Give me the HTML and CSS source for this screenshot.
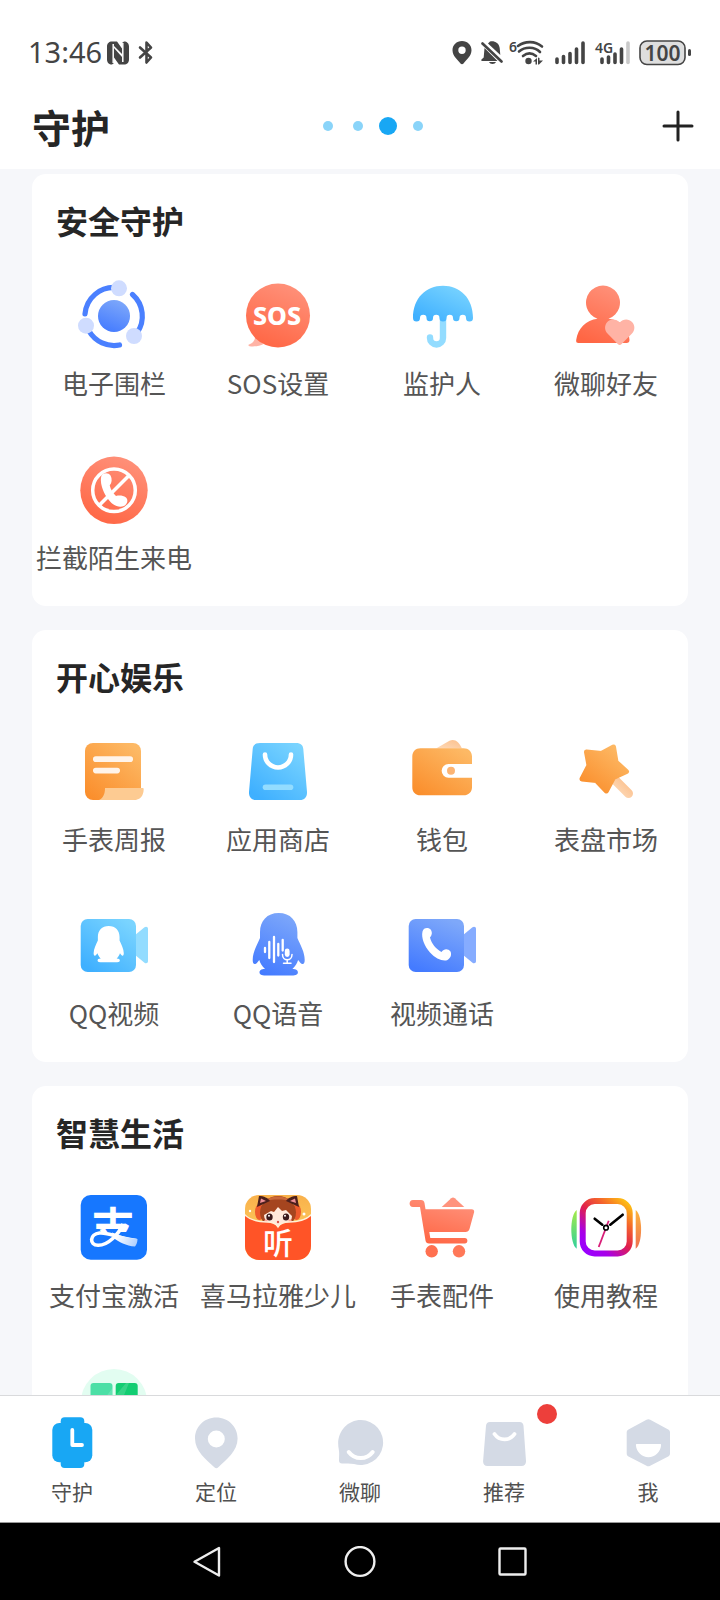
FILE: index.html
```html
<!DOCTYPE html>
<html lang="zh-CN">
<head>
    <meta charset="UTF-8">
    <meta name="viewport" content="width=device-width, initial-scale=1.0">
    <title>守护</title>
    <link rel="stylesheet" href="styles.css">
</head>
<body>
    <!-- shared gradients and shapes -->
    <svg class="defs" width="0" height="0" aria-hidden="true">
        <defs>
            <linearGradient id="red" x1="0.3" y1="1" x2="0.7" y2="0">
                <stop offset="0" stop-color="#ff6644"/><stop offset="1" stop-color="#ff917a"/>
            </linearGradient>
            <linearGradient id="sky" x1="0.1" y1="0.9" x2="0.8" y2="0">
                <stop offset="0" stop-color="#3fb0ff"/><stop offset="1" stop-color="#7ad4ff"/>
            </linearGradient>
            <linearGradient id="blue" x1="0.3" y1="1" x2="0.7" y2="0">
                <stop offset="0" stop-color="#447bff"/><stop offset="1" stop-color="#7ea8fa"/>
            </linearGradient>
            <linearGradient id="orange" x1="0" y1="1" x2="0.8" y2="0">
                <stop offset="0" stop-color="#fa8b28"/><stop offset="1" stop-color="#fdb965"/>
            </linearGradient>
            <linearGradient id="peach" x1="0" y1="1" x2="1" y2="0">
                <stop offset="0" stop-color="#fdd9b8"/><stop offset="1" stop-color="#fcc08c"/>
            </linearGradient>
            <linearGradient id="frame" x1="0.1" y1="1" x2="0.9" y2="0">
                <stop offset="0" stop-color="#9a00ff"/><stop offset="0.2" stop-color="#a800e8"/>
                <stop offset="0.5" stop-color="#e0204c"/><stop offset="0.75" stop-color="#f4642c"/>
                <stop offset="1" stop-color="#fdbb14"/>
            </linearGradient>
            <linearGradient id="strapLeft" x1="0" y1="0" x2="0" y2="1">
                <stop offset="0" stop-color="#a6ea48"/><stop offset="1" stop-color="#2fd09c"/>
            </linearGradient>
            <linearGradient id="strapRight" x1="0" y1="0" x2="0" y2="1">
                <stop offset="0" stop-color="#fdb53c"/><stop offset="1" stop-color="#ef6f50"/>
            </linearGradient>
            <linearGradient id="ribbon" gradientUnits="userSpaceOnUse" x1="44" y1="46" x2="64" y2="56">
                <stop offset="0" stop-color="#fff"/><stop offset="1" stop-color="#a9ccff"/>
            </linearGradient>
            <linearGradient id="honey" x1="0" y1="0" x2="0" y2="1">
                <stop offset="0" stop-color="#f9b04a"/><stop offset="1" stop-color="#ffdc6a"/>
            </linearGradient>
            <clipPath id="payTop"><rect x="10" y="10" width="60" height="34"/></clipPath>
            <clipPath id="bookClip"><rect x="7" y="7" width="66" height="65" rx="14"/></clipPath>
            <path id="penguin" d="M40.7 7C29 7 22 15 22 26v6C19 39 14.7 46 14.7 54c0 3 1 4.5 2.6 4 1.5-.5 2.5-2.5 4-4 .8 3 2.6 6 5.7 9-4 0-5.5 1.5-5.5 3.5 0 2.5 3 3 8 3h22.400c5 0 8-.5 8-3 0-2-1.500-3.500-5.500-3.500 3.100-3 4.900-6 5.700-9 1.500 1.500 2.500 3.500 4 4 1.600.5 2.600-1 2.600-4 0-8-4.300-15-7.300-22v-6C59.400 15 52.400 7 40.700 7z"/>
            <path id="cameraTail" d="M62 28.3l8.5-7c1.6-1.2 3.5-.4 3.5 1.7v32c0 2.1-1.9 2.9-3.5 1.7l-8.5-7z"/>
        </defs>
    </svg>

    <header class="header">
        <div class="status">
            <span class="time">13:46</span>
            <svg width="22" height="26" viewBox="0 0 22 26">
                <path fill="#444" d="M5 1.5h2V23l-2 1.500c-3 0-5-2-5-5v-13c0-3 2-5 5-5zM17 24.500h-2V3l2-1.500c3 0 5 2 5 5v13c0 3-2 5-5 5z"/>
                <path fill="#444" d="M7 1.500h3l5 7V14L7 6zM7 8l8 9v7.500h-3l-5-7z"/>
                <path stroke="#fff" stroke-width="1.500" d="M6.200 4v19M15.800 3v19"/>
            </svg>
            <svg class="bluetooth" width="16" height="26" viewBox="0 0 16 26">
                <path d="M2 7.500l11 10-4.500 5V2.500l4.500 5-11 10" fill="none" stroke="#444" stroke-width="2.600" stroke-linejoin="round" stroke-linecap="round"/>
            </svg>
            <div class="statusRight">
                <svg width="20" height="26" viewBox="0 0 20 26">
                    <path fill="#444" fill-rule="evenodd" d="M10 1C4.500 1 .5 5 .5 10.200.5 16 5.500 19.500 8.500 23.400c.9 1.100 2.100 1.100 3 0 3-3.900 8-7.400 8-13.200C19.500 5 15.500 1 10 1zm0 5.500a3.700 3.700 0 1 1 0 7.400 3.700 3.700 0 0 1 0-7.400z"/>
                </svg>
                <svg width="22" height="26" viewBox="0 0 22 26">
                    <path fill="#444" d="M3.500 8l13 13H1c-1 0-1-1.500 0-2l1.700-1.500zM7 3.500L9 1.500c4-1 9 1 9.700 6.500l.6 7zM8 22h7c-1 2.500-6 2.500-7 0z"/>
                    <path d="M1.500 3.500l19 18" stroke="#444" stroke-width="2.600" stroke-linecap="round"/>
                </svg>
                <svg class="wifi" width="34" height="26" viewBox="3 0 34 26">
                    <text x="0" y="12" class="tiny">6</text>
                    <g fill="none" stroke="#444" stroke-width="2.600" stroke-linecap="round">
                        <path d="M9 6c7.500-5.500 17-5 24 .5M10 11.500c6-5 15.500-5 21 .5M14 16c4-3.200 9-3.200 13 0"/>
                    </g>
                    <circle cx="19.500" cy="21" r="3.200" fill="#444"/>
                    <path fill="#444" d="M24 21.500l4-3.500v6.500h-1.500v-3zM29 17.500l1.500.5v2.500H34L30 24.500h-1z"/>
                </svg>
                <svg width="30" height="26" viewBox="0 0 30 26">
                    <path d="M2 19v3.500M8.500 16.500v6M15 13.500v9M21.500 9v13.500M28 3v19.500" stroke="#444" stroke-width="3.600" stroke-linecap="round"/>
                </svg>
                <svg class="mobile" width="36" height="26" viewBox="0 0 36 26">
                    <text x="1" y="13" class="tiny">4G</text>
                    <path d="M8 19v3.500M14.500 17v5.500M21 14v8.500M27.500 9v13.500" stroke="#444" stroke-width="3.600" stroke-linecap="round"/>
                    <path d="M34 3v19.500" stroke="#c9c9c9" stroke-width="3.600" stroke-linecap="round"/>
                </svg>
                <svg width="53" height="26" viewBox="0 0 53 26">
                    <rect x="1" y="1" width="45" height="23.500" rx="7" fill="#dedede" stroke="#444" stroke-width="1.600"/>
                    <rect x="49" y="9" width="3" height="7" rx="1.500" fill="#444"/>
                    <text x="23.500" y="20.500" class="battery">100</text>
                </svg>
            </div>
        </div>
        <div class="titleBar">
            <h1>守护</h1>
            <div class="dots"><i></i><i></i><i class="on"></i><i></i></div>
            <button class="add" aria-label="添加">
                <svg width="32" height="32" viewBox="0 0 32 32">
                    <path d="M16 2v28M2 16h28" stroke="#222" stroke-width="3" stroke-linecap="round"/>
                </svg>
            </button>
        </div>
    </header>

    <main class="content">
        <section class="card">
            <h2>安全守护</h2>
            <div class="grid">
                <a class="item" href="#">
                    <svg class="icon" viewBox="0 0 80 80">
                        <path d="M11 38A29 29 0 0 1 42 11.500M58.500 18.500A29 29 0 0 1 63 57M45.500 69A29 29 0 0 1 15 55" fill="none" stroke="#4a80ff" stroke-width="5.200" stroke-linecap="round"/>
                        <circle cx="40" cy="40" r="16" fill="url(#blue)"/>
                        <g fill="#cfdcff"><circle cx="45" cy="12.300" r="8"/><circle cx="12" cy="49.700" r="8"/><circle cx="60" cy="60" r="8"/></g>
                    </svg>
                    <span>电子围栏</span>
                </a>
                <a class="item" href="#">
                    <svg class="icon" viewBox="0 0 80 80">
                        <path d="M17 61c0 4-3 6.500-6 7.500-1 .5-.7 1.500.5 1.700 5 .5 10 0 14-2.200z" fill="#ffb3a5"/>
                        <circle cx="40" cy="39.500" r="32" fill="url(#red)"/>
                        <text x="39" y="48.500" class="sos">SOS</text>
                    </svg>
                    <span>SOS设置</span>
                </a>
                <a class="item" href="#">
                    <svg class="icon" viewBox="0 0 80 80">
                        <path d="M41 40v22a6.500 6.500 0 0 1-13 0v-.5" fill="none" stroke="#93dcff" stroke-width="6.400" stroke-linecap="round"/>
                        <path d="M11 42C11 22 24 9.700 41 9.700S71 22 71 42a3.500 3.500 0 0 1-7 0 3.250 3.250 0 0 0-6.500 0 3.250 3.250 0 0 1-6.500 0 3.250 3.250 0 0 0-6.500 0 3.500 3.500 0 0 1-7 0 3.250 3.250 0 0 0-6.500 0 3.250 3.250 0 0 1-6.500 0 3.250 3.250 0 0 0-6.500 0 3.500 3.500 0 0 1-7 0z" fill="url(#sky)"/>
                    </svg>
                    <span>监护人</span>
                </a>
                <a class="item" href="#">
                    <svg class="icon" viewBox="0 0 80 80">
                        <path d="M31.500 42.700a17 17 0 1 1 11 0C55 44 63 52 63.500 64c0 2-1 3-3 3h-48c-2 0-2.500-1-2.300-3C12 52 20 44 31.500 42.700z" fill="url(#red)"/>
                        <path d="M53.700 46.500C50.500 42.500 44 42.500 41.300 46c-3 3.500-3 8 .2 11.500L52 68.300c1 1 2.400 1 3.400 0L66 57.500c3.200-3.500 3.200-8 0-11.500-3-3.500-9-3.500-12.300.5z" fill="#ffb3a5"/>
                    </svg>
                    <span>微聊好友</span>
                </a>
                <a class="item" href="#">
                    <svg class="icon" viewBox="0 0 80 80">
                        <circle cx="40" cy="40.300" r="33.700" fill="url(#red)"/>
                        <circle cx="40" cy="40.300" r="21.300" fill="none" stroke="#fff" stroke-width="3.500"/>
                        <path d="M25.500 55l29-29" stroke="#fff" stroke-width="3.500"/>
                        <path d="M27.500 25.500c2-3 7-3 9 0 1.800 3.500 1.500 7-.8 10 1 4 3.300 7.500 6.300 10.500 3.500-1 7-.5 10 1.500 2.500 2.500 1.500 6.500-2 8.500-6 2.500-12.500-1.500-17-8.500-4.500-6.500-7.500-16-5.500-22z" fill="#fff"/>
                    </svg>
                    <span>拦截陌生来电</span>
                </a>
            </div>
        </section>

        <section class="card">
            <h2>开心娱乐</h2>
            <div class="grid">
                <a class="item" href="#">
                    <svg class="icon" viewBox="0 0 80 80">
                        <rect x="11" y="11" width="56" height="57" rx="8" fill="url(#orange)"/>
                        <rect x="19" y="24.300" width="40" height="5.700" rx="2.800" fill="#fff4ea"/>
                        <rect x="19" y="35.700" width="27" height="5.700" rx="2.800" fill="#fff4ea"/>
                        <path d="M31 56h37.500c.8 0 1.200.4 1.200 1.200C69.500 64 66 68 60 68H25c4-2 6-6 6-12z" fill="#fdcb92"/>
                    </svg>
                    <span>手表周报</span>
                </a>
                <a class="item" href="#">
                    <svg class="icon" viewBox="0 0 80 80">
                        <path d="M22 11h36c5 0 7 2.500 7.300 6L69 60c.3 5-2.500 8-7 8H18c-4.500 0-7.300-3-7-8l3.700-43c.3-3.500 2.300-6 7.300-6z" fill="url(#sky)"/>
                        <path d="M27 22.500a13 13 0 0 0 26 0" fill="none" stroke="#fff" stroke-width="4.600" stroke-linecap="round"/>
                        <rect x="24.700" y="52.500" width="30.600" height="5.600" rx="2.800" fill="#93dcff"/>
                    </svg>
                    <span>应用商店</span>
                </a>
                <a class="item" href="#">
                    <svg class="icon" viewBox="0 0 80 80">
                        <path d="M34 16.500l13.500-7.700c5-2.500 9.500 1 12.500 7.700z" fill="url(#peach)"/>
                        <path d="M18.500 16.300h43c5 0 8.500 3.500 8.500 8.200V32H46.500a6.850 6.850 0 0 0 0 13.700H70v9.500c0 4.800-3.500 8.100-8.500 8.100h-43c-5 0-8.200-3.300-8.200-8.100V24.500c0-4.700 3.200-8.200 8.200-8.200z" fill="url(#orange)"/>
                        <circle cx="49" cy="38.700" r="4" fill="#fcb473"/>
                    </svg>
                    <span>钱包</span>
                </a>
                <a class="item" href="#">
                    <svg class="icon" viewBox="0 0 80 80">
                        <path d="M50 49l12.500 12.500" stroke="url(#peach)" stroke-width="9" stroke-linecap="round"/>
                        <path d="M47.500 15l2.500 15 10.500 9.500-13 6-7.200 13.500-10-10.500-14.300-1.500 7-13.500-2.500-13.500 15 1.500z" fill="url(#orange)" stroke="url(#orange)" stroke-width="5" stroke-linejoin="round"/>
                    </svg>
                    <span>表盘市场</span>
                </a>
                <a class="item" href="#">
                    <svg class="icon" viewBox="0 0 80 80">
                        <use href="#cameraTail" fill="#93dcff"/>
                        <rect x="6.700" y="13" width="55.300" height="53" rx="7" fill="url(#sky)"/>
                        <use href="#penguin" fill="#fff" transform="translate(11.100 16) scale(.58)"/>
                    </svg>
                    <span>QQ视频</span>
                </a>
                <a class="item" href="#">
                    <svg class="icon" viewBox="0 0 80 80">
                        <use href="#penguin" fill="url(#blue)"/>
                        <path d="M27 42v4M31.300 36v16M36 31v25M40.300 38v11.500M44.700 34v10.500" stroke="#fff" stroke-width="2.300" stroke-linecap="round"/>
                        <rect x="46.800" y="42.500" width="4.800" height="8.500" rx="2.400" fill="#fff"/>
                        <path d="M44.500 48.500c0 7 9.500 7 9.500 0M49.200 54v3M45.500 57.200h7.500" fill="none" stroke="#fff" stroke-width="1.500" stroke-linecap="round"/>
                    </svg>
                    <span>QQ语音</span>
                </a>
                <a class="item" href="#">
                    <svg class="icon" viewBox="0 0 80 80">
                        <use href="#cameraTail" fill="#86acff"/>
                        <rect x="6.700" y="13" width="55.300" height="53" rx="7" fill="url(#blue)"/>
                        <path d="M20.500 25.500c1-4 6-4.500 8.500-1.500 1.500 2.500 1 5-1 7.500 1.500 6 6 11.500 11.500 14.500 2.500-3.500 6.500-3.500 9-.5 1.500 3.500 0 7-3.500 8.700-4.500 1.300-11.500-1.700-17-7.700-5.500-6.500-9-14.500-7.500-21z" fill="#fff"/>
                    </svg>
                    <span>视频通话</span>
                </a>
            </div>
        </section>

        <section class="card">
            <h2>智慧生活</h2>
            <div class="grid">
                <a class="item" href="#">
                    <svg class="icon" viewBox="0 0 80 80">
                        <rect x="6.700" y="7" width="66.300" height="64.700" rx="10" fill="#1677ff"/>
                        <text x="39" y="57" class="pay" clip-path="url(#payTop)">支</text>
                        <path d="M49 36C45 46 34 57.500 24 57.300c-9-.3-8.500-11 1.500-12.300 9-1 18 5 37 7.500" fill="none" stroke="#fff" stroke-width="3.600"/>
                        <path d="M38 44.500c7 3 15 5.500 25.500 6.500 0 3-1 5.500-2.500 7.500-9-.5-16-4.500-22-9z" fill="url(#ribbon)"/>
                    </svg>
                    <span>支付宝激活</span>
                </a>
                <a class="item" href="#">
                    <svg class="icon" viewBox="0 0 80 80">
                        <g clip-path="url(#bookClip)">
                            <rect x="6" y="6" width="68" height="67" fill="url(#honey)"/>
                            <ellipse cx="21.500" cy="24" rx="4.500" ry="8" fill="#ee5a2c"/>
                            <ellipse cx="58.500" cy="24" rx="4.500" ry="8" fill="#ee5a2c"/>
                            <ellipse cx="40" cy="24.500" rx="18" ry="16.500" fill="#a5451f"/>
                            <path d="M26 13c7-6 21-6 28 0-8-2-20-2-28 0z" fill="#c9673a"/>
                            <path d="M19 19l2-11c5 0 9 2 11 5zM61 19L59 8c-5 0-9 2-11 5z" fill="#4c1f1c"/>
                            <path d="M22 15l1-4.500 5 2.500zM58 15l-1-4.500-5 2.500z" fill="#ef8f94"/>
                            <path d="M26 27l7-4 3 1 4-5 4 4 4-1 6 6c0 7-7.500 11-14 11S26 34 26 27z" fill="#ffe9db"/>
                            <ellipse cx="31.500" cy="29" rx="3.200" ry="3.500" fill="#3a1a1c"/>
                            <ellipse cx="48" cy="29" rx="3.200" ry="3.500" fill="#3a1a1c"/>
                            <circle cx="31" cy="27.800" r="1" fill="#fff"/><circle cx="47" cy="27.800" r="1" fill="#fff"/>
                            <circle cx="28" cy="33" r="1.700" fill="#ffa79c"/><circle cx="52" cy="33" r="1.700" fill="#ffa79c"/>
                            <circle cx="40" cy="34" r="1.200" fill="#d9534a"/>
                            <circle cx="12" cy="23" r="1.200" fill="#fff"/><circle cx="66" cy="26" r="1.500" fill="#fff"/>
                            <path d="M6 26c6 7 15 8 23 8 5 0 9 1.500 11 5 2-3.500 6-5 11-5 8 0 17-1 23-8v48H6z" fill="#ff5427" stroke="#fff0d8" stroke-width="1.500"/>
                        </g>
                        <text x="40" y="66" class="listen">听</text>
                    </svg>
                    <span>喜马拉雅少儿</span>
                </a>
                <a class="item" href="#">
                    <svg class="icon" viewBox="0 0 80 80">
                        <path d="M39.700 19l9.500-8.800c1.200-1 2.400-1 3.600 0l9.500 8.800z" fill="#ff937d"/>
                        <path d="M11 12h8c2 0 3.200 1 3.500 3l1 6.300h46c2 0 3 1.200 2.600 3L67.500 41c-.6 2-2 3-4 3H27.300l1 6h34.500c3.500 0 3.500 5.500 0 5.500H27c-2 0-3.200-1-3.500-3L18 19h-7c-4.500 0-4.500-7 0-7z" fill="url(#red)"/>
                        <circle cx="29.700" cy="63.300" r="6.200" fill="#ff7050"/><circle cx="57" cy="63.300" r="6.200" fill="#ff7858"/>
                    </svg>
                    <span>手表配件</span>
                </a>
                <a class="item" href="#">
                    <svg class="icon" viewBox="0 0 80 80">
                        <path d="M10.700 22C3.500 27 3.500 56 10.700 60.700z" fill="url(#strapLeft)"/>
                        <path d="M69.700 22c7.200 5 7.200 34 0 38.700z" fill="url(#strapRight)"/>
                        <rect x="16.700" y="13" width="47" height="52.500" rx="12" fill="#fff" stroke="url(#frame)" stroke-width="6"/>
                        <path d="M42.700 32.700L32.700 59" stroke="#d81e78" stroke-width="1.800"/>
                        <path d="M28.700 30.700l7.600 6M44.300 36.700l12.400-10" stroke="#000" stroke-width="2.600" stroke-linecap="round"/>
                        <circle cx="40" cy="39.700" r="2.300" fill="#fff" stroke="#000" stroke-width="1.600"/>
                    </svg>
                    <span>使用教程</span>
                </a>
                <a class="item" href="#">
                    <svg class="icon" viewBox="0 0 80 80">
                        <circle cx="40" cy="40" r="33" fill="#e2fdf1"/>
                        <rect x="16.500" y="21" width="22" height="22" rx="3" fill="#4cdfa6"/>
                        <rect x="41.700" y="21" width="22" height="22" rx="3" fill="#12cd72"/>
                        <path d="M26 43l12.500-17v17zM42 43V33l10-12h3L46 43z" fill="#fff" opacity="0.150"/>
                    </svg>
                </a>
            </div>
        </section>
    </main>

    <nav class="tabs">
        <a class="tab" href="#">
            <svg viewBox="0 0 54 54">
                <g fill="#18a7f4"><rect x="15.700" y="1.300" width="23.600" height="50.700" rx="4"/><rect x="7.300" y="7" width="40" height="39.300" rx="7"/></g>
                <path d="M27.300 14v15H37" fill="none" stroke="#fff" stroke-width="3.800" stroke-linecap="round" stroke-linejoin="round"/>
            </svg>
            <span>守护</span>
        </a>
        <a class="tab" href="#">
            <svg viewBox="0 0 54 54">
                <path d="M27.300 1.500C15 1.500 6 11 6 22.500 6 35 17 43.500 25.300 51.300c1.500 1.300 2.700 1.300 4 0C37.500 43.500 48.600 35 48.600 22.500 48.600 11 39.500 1.500 27.300 1.500zm0 13a8.500 8.500 0 1 1 0 17 8.500 8.500 0 0 1 0-17z" fill="#d4dae5" fill-rule="evenodd"/>
            </svg>
            <span>定位</span>
        </a>
        <a class="tab" href="#">
            <svg viewBox="0 0 54 54">
                <path d="M28 4a22.500 22.500 0 1 1-7 44c-4-1-8-.5-12-.5-2 0-3-1-3-3 0-4 .5-7-.2-11C2.500 18 13 4 28 4z" fill="#d4dae5"/>
                <path d="M15.700 36c6 8 18 8 24 0" fill="none" stroke="#fff" stroke-width="4" stroke-linecap="round"/>
            </svg>
            <span>微聊</span>
        </a>
        <a class="tab" href="#">
            <div class="tabIcon">
                <svg viewBox="0 0 54 54">
                    <path d="M13 6h29.500c2.500 0 3.800 1.300 4 3.800L49 45c.2 3-1.500 5-4.500 5h-34c-3 0-4.600-2-4.400-5L9 9.800C9.200 7.300 10.500 6 13 6z" fill="#d4dae5"/>
                    <path d="M17.500 18c5 7.200 15 7.200 20 0" fill="none" stroke="#fff" stroke-width="3.800" stroke-linecap="round"/>
                </svg>
                <i class="badge"></i>
            </div>
            <span>推荐</span>
        </a>
        <a class="tab" href="#">
            <svg viewBox="0 0 54 54">
                <path d="M25.500 3.700c1.200-.7 2.500-.7 3.700 0l18 9.800c1.200.7 1.800 1.600 1.800 3v21c0 1.400-.6 2.300-1.800 3l-18 9.300c-1.200.7-2.500.7-3.700 0l-18-9.300c-1.200-.7-1.800-1.600-1.800-3v-21c0-1.400.6-2.300 1.800-3z" fill="#d4dae5"/>
                <path d="M16 28h23c.8 0 1.200.5 1.100 1.300C39.500 36 34 41.300 27.500 41.300S15.500 36 14.900 29.300c-.1-.8.3-1.300 1.100-1.300z" fill="#fff"/>
            </svg>
            <span>我</span>
        </a>
    </nav>

    <div class="systemBar">
        <button aria-label="返回">
            <svg viewBox="0 0 32 32"><path d="M28 2v27.500L3.500 15.800z" fill="none" stroke="#eee" stroke-width="2.400" stroke-linejoin="round"/></svg>
        </button>
        <button aria-label="主页">
            <svg viewBox="0 0 32 32"><circle cx="16" cy="15.500" r="14.400" fill="none" stroke="#eee" stroke-width="2.400"/></svg>
        </button>
        <button aria-label="最近任务">
            <svg viewBox="0 0 32 32"><rect x="2.500" y="2.500" width="26" height="26" rx="1" fill="none" stroke="#eee" stroke-width="2.400"/></svg>
        </button>
    </div>
</body>
</html>
```

FILE: styles.css
```css
* {
    box-sizing: border-box;
}
html,body {
    height: 100%;
}
body {
    margin: 0;
    display: flex;
    flex-flow: column;
    background: #f6f7fa;
    color: #262626;
    font-family: "Noto Sans CJK SC", sans-serif;
}
h1,h2 {
    margin: 0;
    font-weight: 700;
}
a {
    color: inherit;
    text-decoration: none;
}
button {
    padding: 0;
    border: 0;
    background: none;
}
svg {
    display: block;
    flex: none;
}
.defs {
    position: absolute;
}

/* top */
.header {
    flex: none;
    padding-bottom: 22px;
    background: #fff;
}
.status {
    display: flex;
    align-items: center;
    height: 105px;
    padding: 0 28px;
}
.time {
    margin-right: 5px;
    padding-bottom: 2px;
    color: #444;
    font: 29px "Noto Sans", sans-serif;
}
.bluetooth {
    margin-left: 9px;
}
.statusRight {
    display: flex;
    gap: 9px;
    margin-left: auto;
}
.wifi,.mobile {
    overflow: visible;
}
.tiny,.battery {
    fill: #444;
    font-family: "Noto Sans", sans-serif;
    font-weight: 600;
}
.tiny {
    font-size: 14px;
}
.battery {
    font-size: 21px;
    text-anchor: middle;
}
.titleBar {
    display: grid;
    grid-template-columns: 1fr auto 1fr;
    align-items: center;
    padding: 0 26px 0 32px;
}
.titleBar h1 {
    font-size: 39px;
    line-height: 42px;
}
.dots {
    display: flex;
    align-items: center;
    gap: 20px;
    margin-left: 20px;
}
.dots i {
    width: 10px;
    height: 10px;
    border-radius: 50%;
    background: #8ad4f9;
}
.dots .on {
    width: 18px;
    height: 18px;
    margin: 0 -4px;
    background: #18a7f4;
}
.add {
    justify-self: end;
}

/* cards */
.content {
    flex: 1;
    min-height: 0;
    overflow: hidden;
    padding: 5px 32px 0;
}
.card {
    margin-bottom: 24px;
    padding: 23px 0 31px;
    border-radius: 14px;
    background: #fff;
}
.card h2 {
    margin-bottom: 33px;
    padding: 0 24px;
    font-size: 32px;
    line-height: 46px;
}
.grid {
    display: grid;
    grid-template-columns: repeat(4, 1fr);
    row-gap: 49px;
}
.item {
    display: flex;
    flex-flow: column;
    align-items: center;
    gap: 9px;
    color: #555;
    font-size: 26px;
    line-height: 36px;
    white-space: nowrap;
}
.icon {
    width: 80px;
    height: 80px;
}
.sos,.pay,.listen {
    fill: #fff;
    font-weight: 700;
    text-anchor: middle;
}
.sos {
    font-family: "Noto Sans", sans-serif;
    font-size: 25px;
    font-weight: 800;
}
.pay {
    font-size: 44px;
}
.listen {
    font-size: 30px;
    font-weight: 500;
}

/* bottom */
.tabs {
    flex: none;
    display: grid;
    grid-template-columns: repeat(5, 1fr);
    padding: 20px 0 17px;
    border-top: 1px solid #d9dadc;
    background: #fff;
}
.tab {
    display: flex;
    flex-flow: column;
    align-items: center;
    gap: 7px;
    color: #505050;
    font-size: 21px;
    line-height: 28px;
}
.tab svg {
    width: 54px;
    height: 54px;
}
.tabIcon {
    position: relative;
}
.badge {
    position: absolute;
    top: -12px;
    left: 60px;
    width: 20px;
    height: 20px;
    border-radius: 50%;
    background: #ed3f3b;
}
.systemBar {
    flex: none;
    display: flex;
    justify-content: center;
    align-items: center;
    gap: 121px;
    height: 78px;
    border-top: 1px solid #999;
    background: #000;
}
.systemBar svg {
    width: 32px;
    height: 32px;
}
```
